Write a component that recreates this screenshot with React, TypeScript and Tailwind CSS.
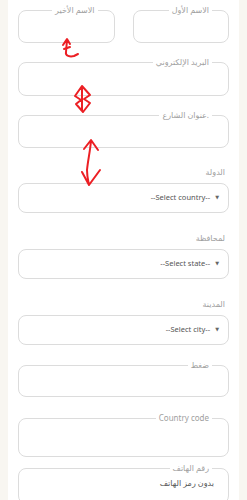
import React from "react";

const font = { fontFamily: '"Noto Sans", "DejaVu Sans", "Liberation Sans", sans-serif' };

function Notched({ label, h, className = "", children }: { label: string; h: string; className?: string; children?: React.ReactNode }) {
  return (
    <fieldset dir="rtl" className={`border border-[#dcdcdc] rounded-[8px] px-[14px] ${h} ${className}`}>
      <legend className="text-[8px] leading-[8px] text-[#a0a0a0] px-[3px] mr-[2px]">{label}</legend>
      {children}
    </fieldset>
  );
}

function SelectBox({ label, placeholder, className = "" }: { label: string; placeholder: string; className?: string }) {
  return (
    <div className={className}>
      <div dir="rtl" className="text-[8px] leading-[8px] text-[#a0a0a0] pr-[4px]">{label}</div>
      <div className="mt-[7px] h-[30px] border border-[#dcdcdc] rounded-[8px] flex items-center justify-end pr-[9px] gap-[5px]">
        <span className="text-[7.5px] text-[#555]">{placeholder}</span>
        <span className="text-[5px] text-[#666]">▼</span>
      </div>
    </div>
  );
}

function Arrows() {
  return (
    <svg className="absolute left-0 top-0 pointer-events-none" width="247" height="200" viewBox="0 0 247 200" fill="none" stroke="#ec1f24" strokeWidth="2" strokeLinecap="round" strokeLinejoin="round">
      <path d="M55 45 L59 39 L62 44 M59 40 L58 52 C57 56 62 57 66 56 L70 54" />
      <path d="M56 49 L62 47" />
      <path d="M74 86 L67 96 L73 100 L68 104 L75 112 L82 103 L76 99 L82 95 Z M74 88 L74 111" />
      <path d="M76 149 L83 140 L90 150 M83 141 C82 152 80 160 79 170 C79 176 80 180 81 185 M74 172 L81 185 L92 170" />
    </svg>
  );
}

export default function App() {
  return (
    <div className="min-h-screen bg-[#f8f6f1] px-[8px]" style={font}>
      <div className="relative bg-white px-[10px] pt-[6px] pb-[20px]">
        <div className="flex gap-[18px]">
          <Notched label="الاسم الأخير" h="h-[37px]" className="flex-1" />
          <Notched label="الاسم الأول" h="h-[37px]" className="flex-1" />
        </div>
        <Notched label="البريد الإلكتروني" h="h-[38px]" className="mt-[15px]" />
        <Notched label=".عنوان الشارع" h="h-[37px]" className="mt-[15px]" />
        <SelectBox label="الدولة" placeholder="--Select country--" className="mt-[20px]" />
        <SelectBox label="لمحافظة" placeholder="--Select state--" className="mt-[21px]" />
        <SelectBox label="المدينة" placeholder="--Select city--" className="mt-[21px]" />
        <Notched label="ضغط" h="h-[36px]" className="mt-[16px]" />
        <Notched label="Country code" h="h-[43px]" className="mt-[17px]" />
        <Notched label="رقم الهاتف" h="h-[40px]" className="mt-[7px]">
          <div className="text-[8px] text-[#555] pt-[5px]">بدون رمز الهاتف</div>
        </Notched>
        <Arrows />
      </div>
    </div>
  );
}
